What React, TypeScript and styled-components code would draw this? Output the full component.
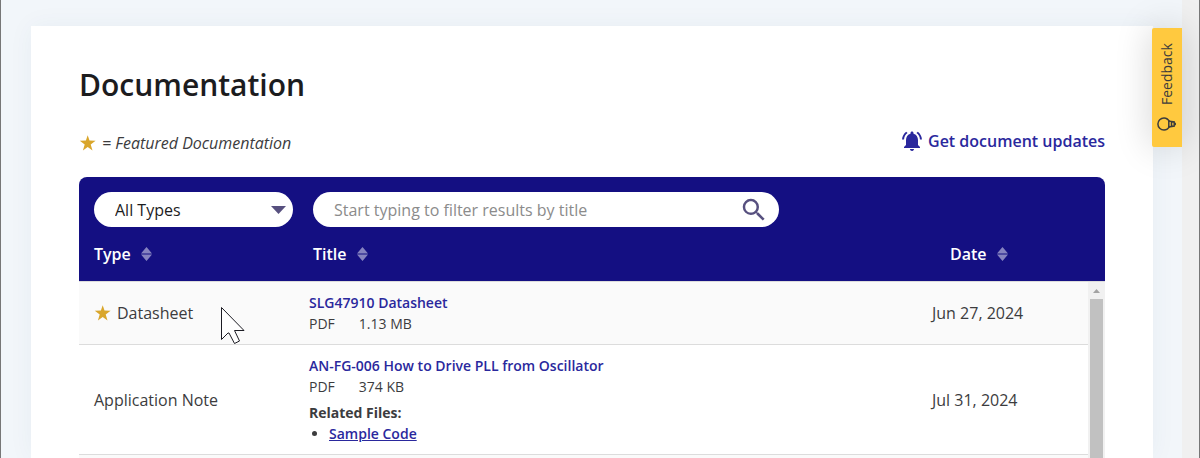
import React from "react";
import styled, { createGlobalStyle } from "styled-components";
import { MdNotificationsActive, MdSearch } from "react-icons/md";

const GlobalStyle = createGlobalStyle`
  *, *::before, *::after { box-sizing: border-box; }
  body {
    margin: 0;
    background: #f2f6fa;
    color: #3c3c3e;
    font-family: "Open Sans", "Noto Sans", sans-serif;
    font-size: 16px;
    line-height: 24px;
  }
`;

const Shell = styled.div`
  position: relative;
  display: grid;
  grid-template-columns: minmax(0, 1fr) 17px;
  height: 100vh;
  overflow: hidden;
  border: solid #777;
  border-width: 0 1px;
`;

const Page = styled.main`
  display: flex;
  padding: 26px 29px 0 30px;
  overflow: hidden;
`;

const PageGutter = styled.div`
  background: #f0f0f0;
`;

const Card = styled.section`
  flex: 1;
  min-width: 0;
  display: flex;
  flex-direction: column;
  padding: 38px 48px 0;
  background: #fff;
  box-shadow: 0 0 24px rgba(40, 70, 110, 0.05);
`;

const Heading = styled.h1`
  margin: 0;
  color: #1c1c1e;
  font-size: 30px;
  font-weight: 600;
  line-height: 42px;
`;

const Legend = styled.div`
  display: flex;
  align-items: flex-start;
  justify-content: space-between;
  margin: 23px 0 20px;
`;

const FeaturedNote = styled.p`
  display: flex;
  align-items: center;
  gap: 5px;
  margin: 0;
  font-style: italic;
  line-height: 28px;
`;

const UpdatesLink = styled.a`
  display: flex;
  align-items: center;
  gap: 4px;
  color: #2a289d;
  font-weight: 600;
  text-decoration: none;
`;

const Panel = styled.div`
  flex: 1;
  min-height: 0;
  display: flex;
  flex-direction: column;
`;

const Filters = styled.form`
  display: flex;
  gap: 20px;
  padding: 15px 15px 0;
  background: #140f82;
  border-radius: 8px 8px 0 0;
`;

const Field = styled.label<{ $width: number; $iconInset: number }>`
  position: relative;
  width: ${(p) => p.$width}px;

  svg {
    position: absolute;
    top: 50%;
    right: ${(p) => p.$iconInset}px;
    transform: translateY(-50%);
    color: #57507f;
    pointer-events: none;
  }
`;

const TypeSelect = styled.select`
  display: block;
  width: 100%;
  height: 35px;
  padding: 0 30px 0 21px;
  appearance: none;
  border: 0;
  border-radius: 18px;
  background: #fff;
  color: #1c1c1e;
  font: inherit;
`;

const SearchInput = styled.input`
  display: block;
  width: 100%;
  height: 35px;
  padding: 0 44px 0 21px;
  border: 0;
  border-radius: 18px;
  background: #fff;
  font: inherit;

  &::placeholder { color: #8b8b8b; opacity: 1; }
`;

const Table = styled.table`
  flex: 1;
  min-height: 0;
  display: flex;
  flex-direction: column;
`;

const TableHead = styled.thead`
  display: block;
  background: #140f82;
`;

const HeadRow = styled.tr`
  display: grid;
  grid-template-columns: 219px minmax(0, 1fr) 155px;
  align-items: center;
  height: 54px;
  padding-left: 15px;
`;

const HeadCell = styled.th`
  padding: 0;
  text-align: left;
`;

const SortButton = styled.button`
  display: flex;
  align-items: center;
  gap: 10px;
  padding: 0;
  border: 0;
  background: none;
  color: #fff;
  font: inherit;
  font-weight: 600;
`;

const TableBody = styled.tbody`
  position: relative;
  flex: 1;
  min-height: 0;
  display: block;
  padding-right: 17px;
  border-top: 1px solid #dcdcdc;
  background: #fafafa;
`;

const Row = styled.tr<{ $shaded?: boolean }>`
  display: grid;
  grid-template-columns: 215px minmax(0, 1fr) 156px;
  align-items: center;
  padding: 10px 0 10px 15px;
  border-bottom: 1px solid #dcdcdc;
  background: ${(p) => (p.$shaded ? "#fafafa" : "#fff")};
`;

const Cell = styled.td`
  padding: 0;
`;

const TypeLabel = styled.span`
  display: flex;
  align-items: center;
  gap: 5px;
`;

const FileCell = styled(Cell)`
  font-size: 14px;
  line-height: 21px;
`;

const FileLink = styled.a`
  display: block;
  color: #2a289d;
  font-weight: 600;
  text-decoration: none;
`;

const FileMeta = styled.div`
  display: flex;
  gap: 24px;
`;

const RelatedTitle = styled.div`
  margin-top: 5px;
  font-weight: 700;
`;

const RelatedList = styled.ul`
  margin: 0;
  padding-left: 20px;

  a { color: #2a289d; font-weight: 600; }
`;

const ScrollTrack = styled.tr`
  position: absolute;
  top: 0;
  right: 0;
  bottom: 0;
  display: flex;
  flex-direction: column;
  align-items: center;
  width: 17px;
  background: #f1f1f1;
`;

const ScrollArrow = styled.td`
  display: flex;
  align-items: center;
  justify-content: center;
  height: 17px;
`;

const ScrollThumb = styled.td`
  flex: 1;
  width: 13px;
  background: #c1c1c1;
`;

const FeedbackTab = styled.button`
  position: absolute;
  top: 28px;
  right: 17px;
  display: flex;
  align-items: center;
  gap: 12px;
  width: 30px;
  height: 119px;
  padding: 16px 0 14px;
  border: 0;
  border-radius: 0 2px 2px 0;
  background: #ffc93f;
  box-shadow: 0 0 36px rgba(0, 0, 0, 0.18);
  color: #3c3c3c;
  font: inherit;
  font-size: 14px;
  writing-mode: vertical-rl;
  transform: rotate(180deg);

  svg { flex-shrink: 0; }
`;

const PointerIcon = styled.svg`
  position: absolute;
  top: 306px;
  left: 219px;
  pointer-events: none;
`;

const Star = () => (
  <svg width="18" height="18" viewBox="0 0 18 18" aria-hidden="true">
    <path
      d="M8.7 1.2l1.8 5.3 6.1.2-4.9 3.8 1.8 5.9-4.8-3.500-4.800 3.500 1.800-5.900L.8 6.700l6.100-.2z"
      fill="#d9a62b"
    />
  </svg>
);

const SortIcon = () => (
  <svg width="11" height="14" viewBox="0 0 11 14" aria-hidden="true">
    <path d="M5.5 0L11 6.5H0zM5.5 14L0 7.5h11z" fill="#8683c0" />
  </svg>
);

const BulbIcon = () => (
  <svg width="19" height="14" viewBox="0 0 19 14" fill="none" stroke="#3c3c3c" strokeWidth="1.5" aria-hidden="true">
    <path d="M6.2 4.8C7.4 2.7 9.4.9 12 .9a6.1 6.1 0 0 1 0 12.200c-2.600 0-4.600-1.800-5.800-3.900" />
    <path d="M7.2 4.1L1.8 4.900v4.200l5.400.8zM4.500 4.500v5M.8 5.800v2.400" />
  </svg>
);

const columns = ["Type", "Title", "Date"];

type Doc = {
  type: string;
  title: string;
  size: string;
  date: string;
  featured?: boolean;
  related?: string[];
};

const docs: Doc[] = [
  { type: "Datasheet", title: "SLG47910 Datasheet", size: "1.13 MB", date: "Jun 27, 2024", featured: true },
  {
    type: "Application Note",
    title: "AN-FG-006 How to Drive PLL from Oscillator",
    size: "374 KB",
    date: "Jul 31, 2024",
    related: ["Sample Code"],
  },
];

export default function App() {
  return (
    <>
      <GlobalStyle />
      <Shell>
        <Page>
          <Card>
            <Heading>Documentation</Heading>
            <Legend>
              <FeaturedNote>
                <Star />= Featured Documentation
              </FeaturedNote>
              <UpdatesLink href="#updates">
                <MdNotificationsActive size={24} aria-hidden="true" />
                Get document updates
              </UpdatesLink>
            </Legend>
            <Panel>
              <Filters>
                <Field $width={199} $iconInset={7}>
                  <TypeSelect aria-label="Document type">
                    <option>All Types</option>
                  </TypeSelect>
                  <svg width="15" height="8" viewBox="0 0 15 8" aria-hidden="true">
                    <path d="M0 0h15L7.5 8z" fill="currentColor" />
                  </svg>
                </Field>
                <Field $width={466} $iconInset={10}>
                  <SearchInput
                    type="text"
                    aria-label="Filter by title"
                    placeholder="Start typing to filter results by title"
                  />
                  <MdSearch size={30} aria-hidden="true" />
                </Field>
              </Filters>
              <Table>
                <TableHead>
                  <HeadRow>
                    {columns.map((name) => (
                      <HeadCell key={name} scope="col">
                        <SortButton type="button">
                          {name}
                          <SortIcon />
                        </SortButton>
                      </HeadCell>
                    ))}
                  </HeadRow>
                </TableHead>
                <TableBody>
                  {docs.map((doc) => (
                    <Row key={doc.title} $shaded={doc.featured}>
                      <Cell>
                        <TypeLabel>
                          {doc.featured && <Star />}
                          {doc.type}
                        </TypeLabel>
                      </Cell>
                      <FileCell>
                        <FileLink href="#file">{doc.title}</FileLink>
                        <FileMeta>
                          <span>PDF</span>
                          <span>{doc.size}</span>
                        </FileMeta>
                        {doc.related && (
                          <>
                            <RelatedTitle>Related Files:</RelatedTitle>
                            <RelatedList>
                              {doc.related.map((name) => (
                                <li key={name}>
                                  <a href="#related">{name}</a>
                                </li>
                              ))}
                            </RelatedList>
                          </>
                        )}
                      </FileCell>
                      <Cell>{doc.date}</Cell>
                    </Row>
                  ))}
                  <ScrollTrack aria-hidden="true">
                    <ScrollArrow>
                      <svg width="7" height="4" viewBox="0 0 7 4">
                        <path d="M3.5 0L7 4H0z" fill="#a3a3a3" />
                      </svg>
                    </ScrollArrow>
                    <ScrollThumb />
                  </ScrollTrack>
                </TableBody>
              </Table>
            </Panel>
          </Card>
        </Page>
        <PageGutter />
        <FeedbackTab type="button">
          <BulbIcon />
          Feedback
        </FeedbackTab>
        <PointerIcon width="26" height="40" viewBox="0 0 26 40" aria-hidden="true">
          <path
            d="M1.5 1.5v32l6.5-6.5h1l5.5 10.5 5-2.5-5-10.500h9.500z"
            fill="#fff"
            stroke="#1c1c24"
          />
        </PointerIcon>
      </Shell>
    </>
  );
}
